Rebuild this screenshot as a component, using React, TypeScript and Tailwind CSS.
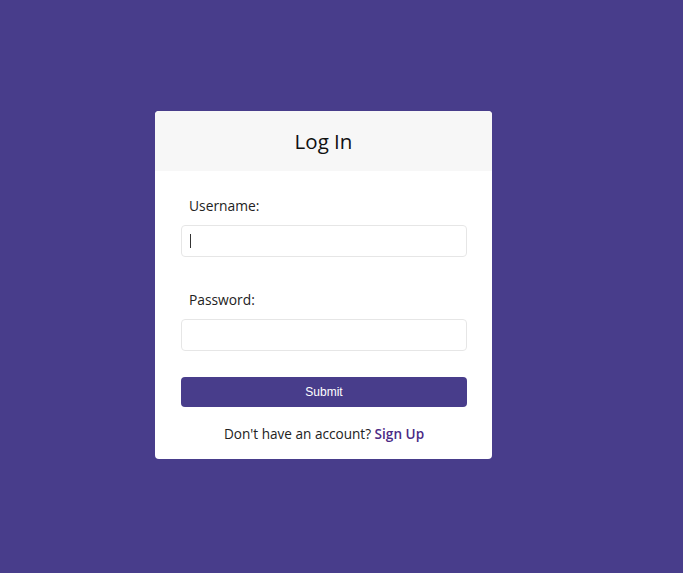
import React from "react";

export default function App() {
  return (
    <div
      className="w-full h-[573px] bg-[#483d8b] flex items-start pt-[111px] pl-[155px]"
      style={{ fontFamily: '"Open Sans", "Noto Sans", sans-serif' }}
    >
      <div className="w-[337px] bg-white rounded-[4px] overflow-hidden">
        <div className="h-[60px] bg-[#f7f7f7] flex items-center justify-center">
          <h1 className="text-[20.5px] leading-none text-[#111]">Log In</h1>
        </div>
        <div className="pl-[26px] pr-[25px] pt-[24px] pb-[14px] flex flex-col">
          <label className="pl-[8px] text-[13.8px] leading-[22px] text-[#222] mb-[8px]">Username:</label>
          <div className="relative">
            <input
              className="w-full h-[32px] border border-[#e6e6e6] rounded-[4px] outline-none px-[9px] text-[14px]"
              type="text"
            />
            <div className="absolute left-[9px] top-[9px] w-[1px] h-[14px] bg-[#333]" />
          </div>
          <label className="pl-[8px] text-[13.8px] leading-[22px] text-[#222] mt-[32px] mb-[8px]">Password:</label>
          <input
            className="w-full h-[32px] border border-[#e6e6e6] rounded-[4px] outline-none px-[9px] text-[14px]"
            type="password"
          />
          <button
            className="mt-[26px] h-[30px] w-full bg-[#483d8b] rounded-[4px] text-white text-[12px]"
            style={{ fontFamily: '"Liberation Sans", Arial, sans-serif' }}
          >
            Submit
          </button>
          <p className="mt-[16px] text-center text-[13.6px] leading-[22px] text-[#222]">
            Don't have an account? <span className="font-semibold text-[#4b2a86]">Sign Up</span>
          </p>
        </div>
      </div>
    </div>
  );
}
